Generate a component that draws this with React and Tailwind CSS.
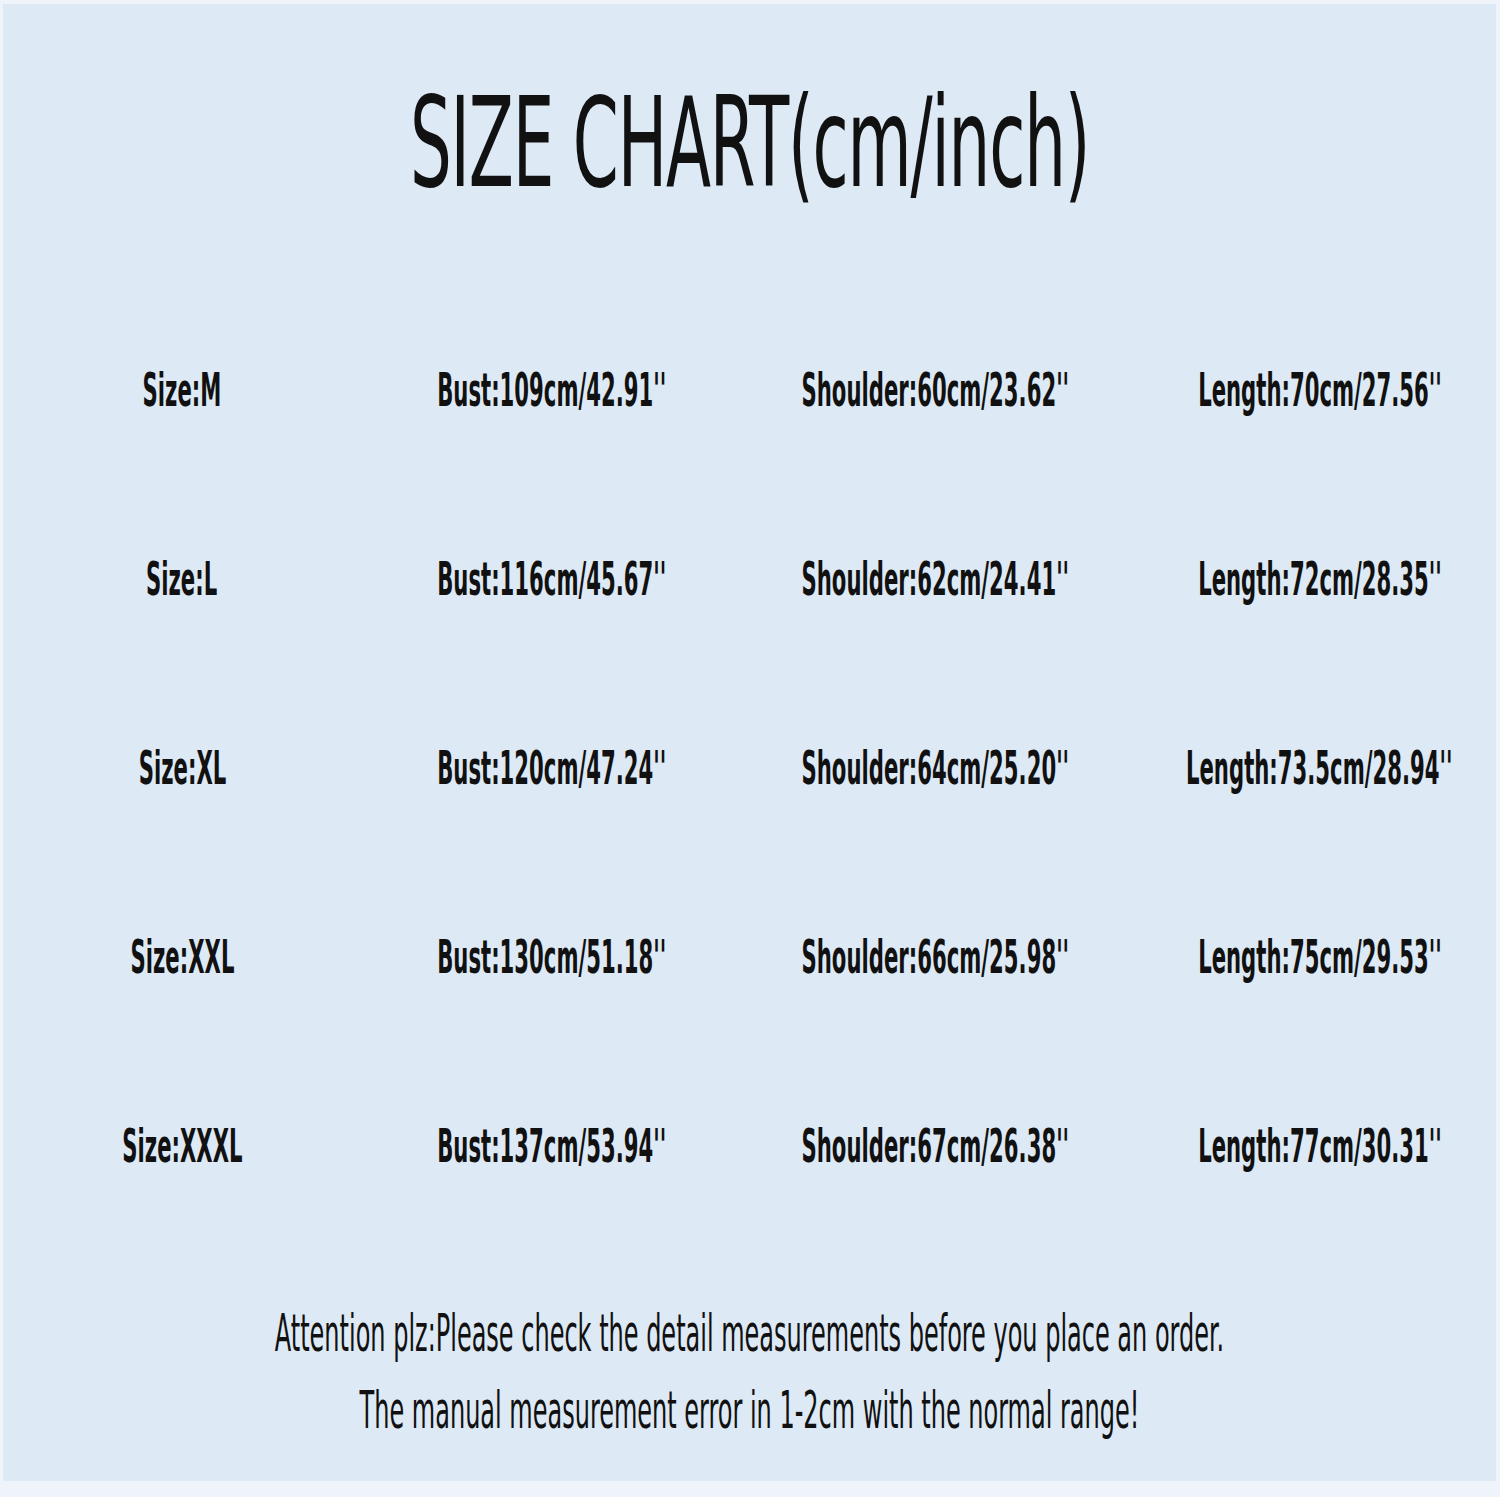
const rows = [
  ["Size:M", "Bust:109cm/42.91''", "Shoulder:60cm/23.62''", "Length:70cm/27.56''"],
  ["Size:L", "Bust:116cm/45.67''", "Shoulder:62cm/24.41''", "Length:72cm/28.35''"],
  ["Size:XL", "Bust:120cm/47.24''", "Shoulder:64cm/25.20''", "Length:73.5cm/28.94''"],
  ["Size:XXL", "Bust:130cm/51.18''", "Shoulder:66cm/25.98''", "Length:75cm/29.53''"],
  ["Size:XXXL", "Bust:137cm/53.94''", "Shoulder:67cm/26.38''", "Length:77cm/30.31''"],
];

const narrow = { fontFamily: '"DejaVu Sans Condensed", "Liberation Sans", sans-serif' };

function Cell({ text, className = "" }) {
  return (
    <div className={`min-w-0 flex justify-center ${className}`}>
      <p className="text-[46px] leading-none font-bold [transform:scaleX(0.512)] whitespace-nowrap">{text}</p>
    </div>
  );
}

export default function App() {
  return (
    <div className="w-[1500px] h-[1497px] bg-[#eef4fa] pt-[4px] pl-[3px] pr-[4px] pb-[16px]">
      <div className="h-full bg-[#dde9f5] flex flex-col text-[#111]" style={narrow}>
        <div className="h-[250px] flex items-start justify-center pt-[77px]">
          <h1 className="text-[124px] leading-none font-normal tracking-[-2px] [transform:scaleX(0.59)] whitespace-nowrap">
            SIZE CHART(cm/inch)
          </h1>
        </div>
        <div className="mt-[113px] flex flex-col">
          {rows.map((r) => (
            <div key={r[0]} className="grid grid-cols-[358px_382px_384px_369px] h-[189px] items-start">
              <Cell text={r[0]} />
              <Cell text={r[1]} />
              <Cell text={r[2]} />
              <Cell text={r[3]} className="pl-[16px]" />
            </div>
          ))}
        </div>
        <div className="mt-[-4px] flex flex-col items-center gap-[26px]">
          <p className="text-[51px] leading-none [transform:scaleX(0.523)] whitespace-nowrap">
            Attention plz:Please check the detail measurements before you place an order.
          </p>
          <p className="text-[51px] leading-none [transform:scaleX(0.523)] whitespace-nowrap">
            The manual measurement error in 1-2cm with the normal range!
          </p>
        </div>
      </div>
    </div>
  );
}
